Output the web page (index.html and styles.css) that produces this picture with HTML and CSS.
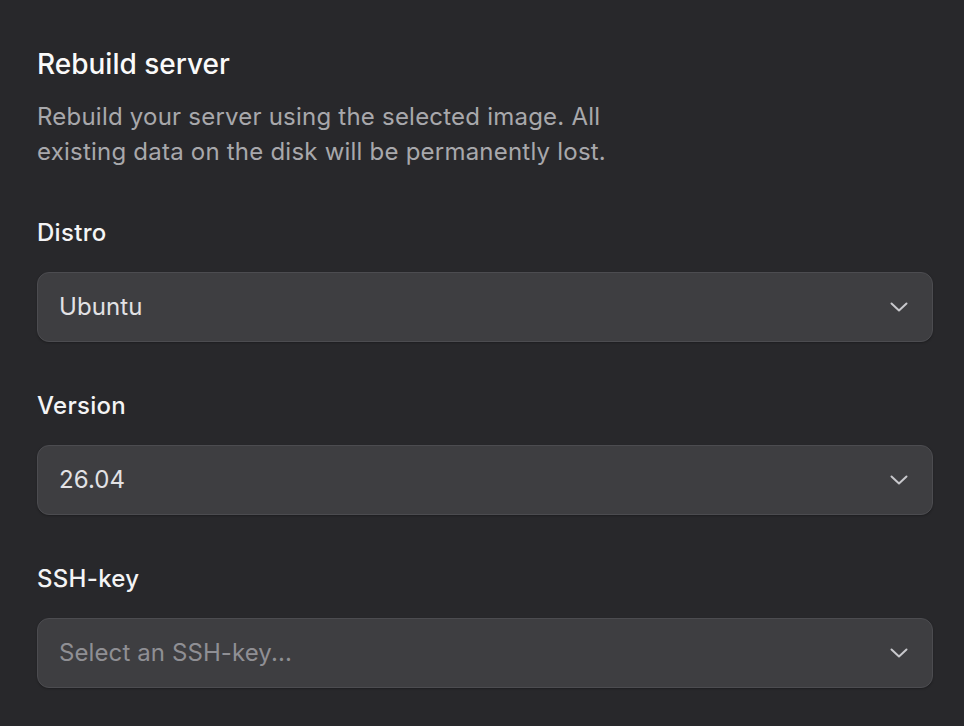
FILE: index.html
```html
<!DOCTYPE html>
<html lang="en">
<head>
<meta charset="utf-8">
<title>Rebuild server</title>
<link rel="stylesheet" href="styles.css">
</head>
<body>
<main class="panel">
  <h1 class="title">Rebuild server</h1>
  <p class="desc">Rebuild your server using the selected image. All<br>existing data on the disk will be permanently lost.</p>

  <div class="fields">
    <div class="field">
      <label class="label">Distro</label>
      <div class="select">
        <span class="value">Ubuntu</span>
        <svg class="chev" width="18" height="10" viewBox="0 0 18 10"><path d="M1.5 1.5 L9 8.5 L16.5 1.5" fill="none" stroke="currentColor" stroke-width="2" stroke-linecap="round" stroke-linejoin="round"/></svg>
      </div>
    </div>

    <div class="field">
      <label class="label">Version</label>
      <div class="select">
        <span class="value">26.04</span>
        <svg class="chev" width="18" height="10" viewBox="0 0 18 10"><path d="M1.5 1.5 L9 8.5 L16.5 1.5" fill="none" stroke="currentColor" stroke-width="2" stroke-linecap="round" stroke-linejoin="round"/></svg>
      </div>
    </div>

    <div class="field">
      <label class="label">SSH-key</label>
      <div class="select">
        <span class="value placeholder">Select an SSH-key...</span>
        <svg class="chev" width="18" height="10" viewBox="0 0 18 10"><path d="M1.5 1.5 L9 8.5 L16.5 1.5" fill="none" stroke="currentColor" stroke-width="2" stroke-linecap="round" stroke-linejoin="round"/></svg>
      </div>
    </div>
  </div>
</main>
</body>
</html>
```

FILE: styles.css
```css
html, body {
  margin: 0;
  padding: 0;
  background: #28282b;
  height: 100%;
}
body {
  font-family: Inter, "Noto Sans", sans-serif;
  color: #fafafa;
}
.panel {
  padding: 48px 31px 0 37px;
  display: flex;
  flex-direction: column;
}
.title {
  margin: 0;
  font-size: 28px;
  line-height: 32px;
  font-weight: 500;
  color: #fafafa;
}
.desc {
  margin: 19px 0 0;
  font-size: 24px;
  line-height: 35px;
  font-weight: 400;
  letter-spacing: 0.22px;
  color: #a8a8ac;
}
.fields {
  margin-top: 49px;
  display: flex;
  flex-direction: column;
  gap: 49px;
}
.field {
  display: flex;
  flex-direction: column;
  gap: 24px;
}
.label {
  font-size: 24px;
  line-height: 30px;
  font-weight: 500;
  letter-spacing: 0.3px;
  color: #f4f4f5;
}
.select {
  box-sizing: border-box;
  height: 70px;
  display: flex;
  align-items: center;
  justify-content: space-between;
  padding: 0 24px 0 21px;
  background: #3e3e41;
  border: 1px solid #4c4c50;
  border-radius: 12px;
  box-shadow: 0 1px 2px rgba(0, 0, 0, 0.25);
}
.value {
  font-size: 24px;
  line-height: 30px;
  letter-spacing: 0.1px;
  color: #e2e2e5;
}
.placeholder {
  color: #8f8f94;
}
.chev {
  color: #c8c8cc;
  flex: none;
}
```
